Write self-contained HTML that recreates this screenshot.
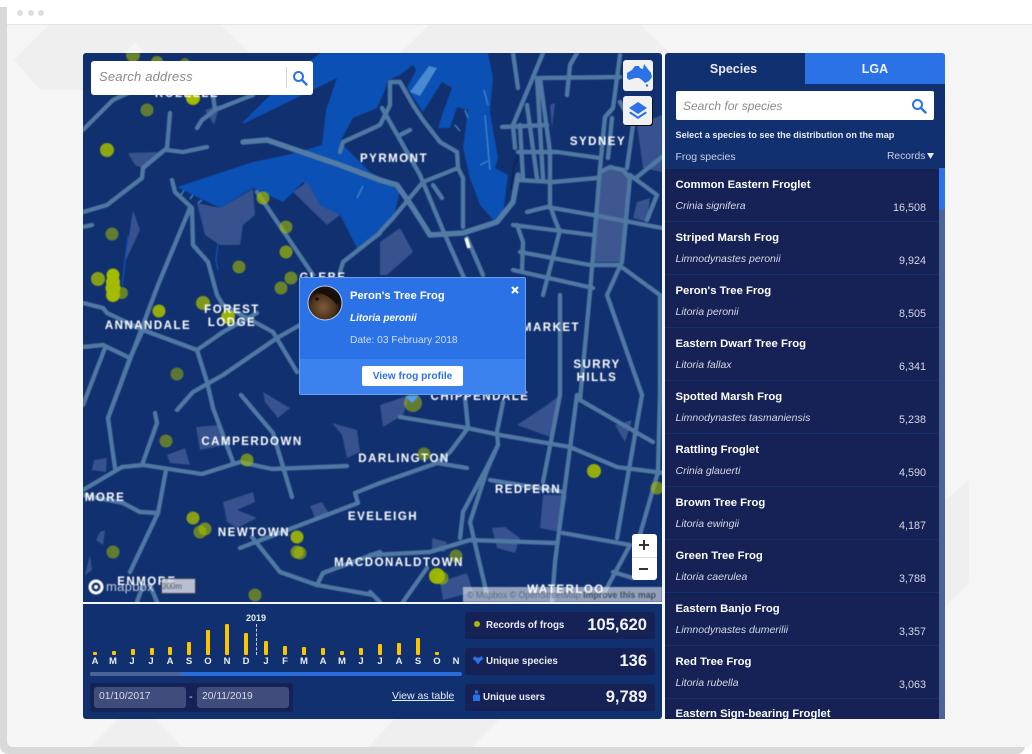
<!DOCTYPE html>
<html><head><meta charset="utf-8"><style>
*{box-sizing:border-box}
html,body{margin:0;padding:0;width:1032px;height:754px;overflow:hidden;background:#fff;font-family:"Liberation Sans",sans-serif}
.abs,.abs *{position:absolute}
.t{white-space:nowrap;line-height:1}
.row{left:665px;width:274px;height:53px;background:#162155;border-bottom:1px solid #12306f}
.row b{left:10.5px;top:9px;font-size:11.3px;color:#fff;white-space:nowrap;line-height:14px}
.row i{left:10.5px;top:31px;font-size:10.5px;color:#d5d9e6;white-space:nowrap;line-height:13px}
.row span{right:13px;top:33px;font-size:10.8px;color:#d5d9e6;line-height:13px}
.m{font-size:9.5px;font-weight:bold;color:#e8ebf3;width:16px;text-align:center;top:656px;line-height:11px}
.bar{background:#fdc500;width:4px;border-radius:1px}
.stat{left:465px;width:190px;height:27px;background:#162155;border-radius:3px}
.stat b{font-size:9.8px;color:#e8ebf3;top:7.500px;line-height:12px;white-space:nowrap}
.stat u{text-decoration:none;right:8px;top:4px;font-size:16.5px;font-weight:bold;color:#f1f3f8;line-height:19px}
</style></head><body>
<div class="abs" style="left:0;top:0;width:1032px;height:754px">
<div style="left:0;top:7px;width:1025px;height:747px;background:#d9d9d9;border-radius:0 0 8px 8px"></div>
<div style="left:7px;top:0;width:1025px;height:747px;background:#f5f5f5;border-radius:6px;overflow:hidden"></div>
<svg width="1032" height="754" style="left:0;top:0"><g fill="#efefef">
<polygon points="50,24 220,24 250,53 145,53 135,43 125,53 83,53 83,90 40,90 14,60"/>
<polygon points="430,24 640,24 670,53 400,53"/>
<polygon points="118,719 155,719 182,747 90,747"/>
<polygon points="395,719 500,719 472,747 368,747"/>
<polygon points="945,500 969,480 969,583 945,607"/>
</g></svg>
<div style="left:7px;top:0;width:1025px;height:25px;background:#fff;border-bottom:1px solid #e3e3e3;border-radius:6px 6px 0 0"></div>
<div style="left:17px;top:10px;width:6px;height:6px;border-radius:50%;background:#dedede"></div>
<div style="left:28px;top:10px;width:6px;height:6px;border-radius:50%;background:#dedede"></div>
<div style="left:38px;top:10px;width:6px;height:6px;border-radius:50%;background:#dedede"></div>

<!-- MAP -->
<div style="left:83px;top:53px;width:579px;height:549px;background:#11306f;border-radius:3px 3px 0 0;overflow:hidden">
<svg width="580" height="550" viewBox="83 53 580 550" style="left:0;top:0;filter:blur(.45px)">
<polygon fill="#0b50b4" points="243,122 280,85 320,53 488,53 493,78 490,112 498,158 495,168 508,175 503,215 494,222 440,300 395,240 357,248 340,215 320,205 303,182 283,202 253,188 220,208 177,187 253,162"/>
<polygon fill="#11306f" points="243,124 337,78 326,110 322,145 287,155 253,162"/>
<polygon fill="#4a8ad2" points="410,92 429,66 437,68 420,96"/>
<polygon fill="#11306f" points="340,142 353,118 377,108 385,90 388,80 400,75 413,65 416,70 407,88 423,112 442,82 452,88 443,112 438,128 450,128 457,107 468,110 463,148 470,178 480,205 495,222 480,280 400,280 392,225 400,190 370,172"/>
<polygon fill="#11306f" points="357,250 395,218 400,280 340,290"/>
<polygon fill="#0b50b4" points="380,205 388,212 380,225 372,228"/>
<g stroke="#3e80cc" stroke-width="1.5" fill="none">
<path d="M184 190l-3 5M193 195l-3 4M202 200l-4 3"/><path d="M363 186l-6 12M465 110l3 8M455 125l5 6M484 90l4 15M485 115l5 55M480 165l8-4"/>
</g>
<path d="M222 210l-6 50 2 10M128 236l-6 50" stroke="#0b50b4" stroke-width="1.5" fill="none"/>
<path d="M518 157l-4 8-3 25" stroke="#0a1f4f" stroke-width="1" fill="none"/>
<g fill="#37528f">
<polygon points="128,153 160,152 143,168 135,165"/>
<polygon points="197,203 220,208 253,189 255,215 243,225 240,245 220,245 205,235"/>
<polygon points="293,192 307,182 320,205 340,215 327,225"/>
<polygon points="263,392 290,408 278,418 265,402"/>
<polygon points="196,427 220,425 225,445 200,450"/>
<polygon points="167,455 185,448 190,465 170,463"/>
<polygon points="332,423 357,430 360,452 347,458 342,435"/>
<polygon points="223,502 253,492 255,502 237,510 257,518 237,528 227,522"/>
<polygon points="543,495 567,495 560,532 540,528"/>
<polygon points="517,425 547,405 560,395 553,438"/>
<polygon points="440,582 467,573 473,592 443,600"/>
<polygon points="380,405 410,395 403,415 383,427"/>
<polygon points="492,528 505,527 520,538 515,553 497,548"/>
<polygon points="432,538 447,542 445,552 432,550"/>
<polygon points="637,125 662,115 662,172 643,168"/>
<polygon points="637,202 650,198 647,222 633,218"/>
<polygon points="380,242 400,228 413,252 387,275 380,275"/>
<polygon points="550,105 555,103 552,128"/>
<polygon points="205,110 220,105 214,125"/>
<polygon points="133,210 140,230 125,262"/>
<polygon points="94,460 107,458 106,472 92,470"/>
<polygon points="310,506 322,502 328,512 315,518"/>
<polygon points="615,425 632,420 625,442"/>
<polygon points="100,532 105,530 103,545 96,540"/>
<polygon points="90,555 92,570 85,575"/>
</g>
<polygon fill="#3f5790" points="600,172 610,167 623,170 630,178 622,262 593,262"/>
<g fill="none" stroke="#4f78a3" stroke-width="4.400" stroke-linecap="round" stroke-linejoin="round">
<path d="M83 130L113 100 128 93"/>
<path d="M197 128L202 120 215 110 240 100 253 95M213 95L215 110"/>
<path d="M170 113L167 148 143 168 142 178 107 205 83 212"/>
<path d="M167 150L183 152 207 147"/>
<path d="M83 227L92 225"/>
<path d="M172 180L175 192 192 208 193 245 208 262 217 295 223 305 273 332 297 372"/>
<path d="M190 208L158 285 108 418 115 468"/>
<path d="M257 192L313 275"/>
<path d="M340 272L343 262 380 233"/>
<path d="M340 152L343 142 380 125 390 105 390 82 400 82 413 105 423 120 440 142 457 152 458 168 463 178 463 227"/>
<path d="M382 108L420 175 445 235 465 280"/>
<path d="M458 168L423 182 393 218 380 232"/>
<path d="M400 135L410 130M433 185L442 198"/>
<path d="M513 53L518 88M543 53L513 125 515 148"/>
<path d="M540 78L550 152 550 205M527 105L537 178M537 78L543 178M520 125L523 178"/>
<path d="M502 127L547 125M518 152L557 152 600 158M518 180L553 182 597 178"/>
<path d="M542 78L620 77M567 95L570 65 577 53"/>
<path d="M620 55L613 108 605 117 600 168 590 292"/>
<path d="M612 118L608 158"/>
<path d="M600 172L610 167 623 170 630 178 622 262 607 295"/>
<path d="M620 102L633 125 627 168"/>
<path d="M527 212L547 207 593 215 662 228"/>
<path d="M513 225L593 235"/>
<path d="M630 175L657 195 647 220M637 177L662 157"/>
<path d="M560 230L543 295M520 252L590 265 620 265"/>
<path d="M517 225L523 242 522 272M513 270L593 288M623 268L660 295"/>
<path d="M550 205L555 220 560 232M467 238L483 275"/>
<path d="M83 303L103 308 107 313 143 330 197 350 223 332 257 313"/>
<path d="M197 350L207 382 213 408 233 462"/>
<path d="M177 410L193 392 223 375 277 338 300 325"/>
<path d="M83 347L103 345 130 358M105 348L83 405M143 330L130 358 108 418"/>
<path d="M155 413L157 423 142 465"/>
<path d="M83 490L122 467 143 465 202 474 240 462 272 469 347 466"/>
<path d="M241 395L273 433 292 497"/>
<path d="M166 470L158 513 130 572"/>
<path d="M83 495L123 503 140 512 158 513"/>
<path d="M240 548L358 503 355 493 380 483 437 463 467 468"/>
<path d="M252 537L280 572 317 585 373 595"/>
<path d="M317 585L323 573 380 552"/>
<path d="M137 602L143 585M150 585L157 602"/>
<path d="M400 417L467 428 500 435 570 447 617 467 663 473"/>
<path d="M465 398L468 427M503 402L497 432 498 445 487 467 463 512 460 538"/>
<path d="M498 445L487 470 470 522 487 595"/>
<path d="M370 555L430 552 470 540 555 543"/>
<path d="M560 395L543 482M577 395L555 562 552 602"/>
<path d="M580 400L653 442M642 395L617 538M660 395L658 472 637 545"/>
<path d="M563 533L630 545 603 595M490 480L563 492"/>
<path d="M468 428L450 452 437 463"/>
<path d="M403 602L427 568M370 592L380 602M613 572L633 578"/>
<path d="M560 295L560 395M590 292L580 400M607 295L642 395M660 295L660 395"/>
</g>
<g fill="none" stroke="#527ba5" stroke-width="5.500" stroke-linecap="round" stroke-linejoin="round">
<path d="M243 142L267 140 340 165 380 180 397 185 413 208 430 235 463 233 497 222 513 202 518 175"/>
</g>
<path d="M466 238l3 10" stroke="#fff" stroke-width="3.500"/>
<g fill="#a4bb00">
<circle cx="133" cy="55" r="7" opacity=".6"/><circle cx="157" cy="62" r="6" opacity=".6"/><circle cx="185" cy="63" r="5" opacity=".5"/>
<circle cx="193" cy="98" r="7"/><circle cx="147" cy="110" r="6.500" opacity=".55"/><circle cx="107" cy="150" r="7" opacity=".85"/>
<circle cx="112" cy="234" r="6.500" opacity=".55"/><circle cx="98" cy="279" r="7" opacity=".8"/><circle cx="113" cy="275" r="6.500"/>
<circle cx="113" cy="282" r="7"/><circle cx="113" cy="288" r="7.500"/><circle cx="113" cy="295" r="7"/><circle cx="122" cy="293" r="6" opacity=".6"/>
<circle cx="263" cy="198" r="6.500" opacity=".7"/><circle cx="286" cy="227" r="6.500" opacity=".6"/><circle cx="286" cy="252" r="6.500" opacity=".7"/>
<circle cx="239" cy="267" r="6.500" opacity=".6"/><circle cx="291" cy="278" r="6.500" opacity=".6"/><circle cx="281" cy="288" r="6.500" opacity=".6"/>
<circle cx="159" cy="311" r="6.500" opacity=".9"/><circle cx="203" cy="303" r="7" opacity=".75"/><circle cx="228" cy="317" r="7" opacity=".95"/>
<circle cx="177" cy="374" r="6.500" opacity=".5"/><circle cx="166" cy="441" r="6.500" opacity=".55"/><circle cx="247" cy="460" r="6.500" opacity=".65"/>
<circle cx="193" cy="518" r="6.500" opacity=".8"/><circle cx="205" cy="529" r="6.500" opacity=".65"/><circle cx="200" cy="532" r="6.500" opacity=".6"/>
<circle cx="113" cy="552" r="6.500" opacity=".55"/><circle cx="297" cy="537" r="6.500" opacity=".9"/><circle cx="297" cy="552" r="6.500" opacity=".65"/><circle cx="300" cy="553" r="6.500" opacity=".6"/>
<circle cx="255" cy="595" r="6.500" opacity=".55"/><circle cx="413" cy="403" r="9" opacity=".55"/><circle cx="424" cy="454" r="6.500" opacity=".55"/>
<circle cx="594" cy="471" r="7" opacity=".9"/><circle cx="657" cy="488" r="6.500" opacity=".6"/><circle cx="456" cy="556" r="6.500" opacity=".55"/>
<circle cx="442" cy="578" r="6.500" opacity=".6"/><circle cx="437" cy="576" r="8" opacity=".95"/>
</g>
<polygon fill="#4aa0ff" points="405,396 419,396 412,403"/>
<g fill="#fff" font-family="'Liberation Sans',sans-serif" font-weight="bold" font-size="11.500" text-anchor="middle" letter-spacing="1.500">
<text x="187" y="97">ROZELLE</text><text x="394" y="162">PYRMONT</text><text x="598" y="145">SYDNEY</text><text x="323" y="281">GLEBE</text>
<text x="232" y="313">FOREST</text><text x="232" y="326">LODGE</text><text x="148" y="329">ANNANDALE</text><text x="252" y="445">CAMPERDOWN</text>
<text x="404" y="462">DARLINGTON</text><text x="383" y="520">EVELEIGH</text><text x="254" y="536">NEWTOWN</text><text x="105" y="501">MORE</text>
<text x="147" y="585">ENMORE</text><text x="399" y="566">MACDONALDTOWN</text><text x="528" y="493">REDFERN</text><text x="566" y="593">WATERLOO</text>
<text x="597" y="368">SURRY</text><text x="597" y="381">HILLS</text><text x="551" y="331">MARKET</text><text x="480" y="400">CHIPPENDALE</text>
</g>
<rect x="463" y="587" width="199" height="15" fill="#fff" opacity=".55"/>
<text x="467" y="598" font-family="'Liberation Sans',sans-serif" font-size="8.800" fill="#5c6a80">© Mapbox © OpenStreetMap <tspan font-weight="bold" fill="#444d5c">Improve this map</tspan></text>
<circle cx="96" cy="587" r="6" fill="none" stroke="#fff" stroke-width="3"/><circle cx="96" cy="587" r="2" fill="#fff"/>
<text x="106" y="591" font-family="'Liberation Sans',sans-serif" font-size="13" fill="#fff" opacity=".75" letter-spacing=".3">mapbox</text>
<rect x="161.500" y="578.500" width="34" height="15" fill="#d5d9e6" opacity=".85" stroke="#444" stroke-width="1"/>
<text x="162" y="589" font-family="'Liberation Sans',sans-serif" font-size="8" fill="#555">300m</text>
</svg>
</div>

<!-- search address -->
<div style="left:91px;top:61px;width:222px;height:34px;background:#fff;border-radius:3px"></div>
<div class="t" style="left:99px;top:70px;font-size:13px;font-style:italic;color:#8a8a8a;letter-spacing:.2px">Search address</div>
<div style="left:286px;top:67px;width:1px;height:21px;background:#d4d4d4"></div>
<svg width="16" height="16" viewBox="0 0 16 16" style="left:292px;top:70px"><circle cx="6.500" cy="6.500" r="4.500" fill="none" stroke="#2b72e6" stroke-width="2"/><path d="M10 10l4.500 4.500" stroke="#2b72e6" stroke-width="2.400" stroke-linecap="round"/></svg>
<!-- Aus button -->
<div style="left:623px;top:60px;width:30px;height:31px;background:#f1f1f1;border-radius:3px"></div>
<svg width="30" height="31" viewBox="0 0 30 31" style="left:623px;top:60px"><path d="M4 13L9 10 12 6 16 6 17 8 20 9 21 4 24 8 28 13 29 17 26 21 22 23 19 20 16 18 12 18 6 20 4 18Z" fill="#2b72e6"/><circle cx="24" cy="25.500" r="1.200" fill="#2b72e6"/></svg>
<!-- layers -->
<div style="left:623px;top:96px;width:29px;height:29px;background:#f1f1f1;border-radius:3px;box-shadow:1px 1px 0 #111"></div>
<svg width="22" height="22" viewBox="0 0 22 22" style="left:627px;top:100px"><path d="M11 2L20 8 11 14 2 8Z" fill="#2b72e6"/><path d="M3.500 11.500L11 16.500 18.500 11.500 20 13 11 19 2 13Z" fill="#2b72e6"/></svg>
<!-- zoom -->
<div style="left:632px;top:534px;width:25px;height:46px;background:#fff;border-radius:3px"></div>
<div style="left:632px;top:557px;width:25px;height:1px;background:#ddd"></div>
<div style="left:639px;top:544px;width:10px;height:2px;background:#333"></div><div style="left:643px;top:540px;width:2px;height:10px;background:#333"></div>
<div style="left:639px;top:568px;width:9px;height:2px;background:#333"></div>

<!-- popup -->
<div style="left:299px;top:277px;width:227px;height:118px;background:#2b72e6;border:1px solid #6d9fea;border-radius:2px;overflow:hidden"></div>
<div style="left:300px;top:359px;width:225px;height:35px;background:#3b82ee"></div>
<svg width="36" height="36" viewBox="0 0 36 36" style="left:307px;top:285px"><defs><radialGradient id="fg" cx=".45" cy=".62" r=".5"><stop offset="0" stop-color="#7e5c3a"/><stop offset=".7" stop-color="#4c331c"/><stop offset="1" stop-color="#1c120a"/></radialGradient></defs><circle cx="18" cy="18" r="17" fill="url(#fg)" stroke="#b8cdf0" stroke-width="1"/><path d="M12 3 Q26 4 34 14 L30 20 Q20 8 10 8Z" fill="#17100a"/><ellipse cx="10" cy="14" rx="2" ry="1.500" fill="#1a0f08"/></svg>
<div class="t" style="left:350px;top:291px;font-size:11.200px;font-weight:bold;color:#fff">Peron's Tree Frog</div>
<div class="t" style="left:350px;top:314px;font-size:10px;font-weight:bold;font-style:italic;color:#fff">Litoria peronii</div>
<div class="t" style="left:350px;top:336px;font-size:10.200px;color:#cfdef8">Date: 03 February 2018</div>
<svg width="10" height="10" viewBox="0 0 10 10" style="left:510px;top:285px"><path d="M2 2l6 6M8 2l-6 6" stroke="#fff" stroke-width="2"/></svg>
<div style="left:362px;top:366px;width:101px;height:20px;background:#fff;border-radius:2px"></div>
<div class="t" style="left:362px;top:372px;width:101px;text-align:center;font-size:10.200px;font-weight:bold;color:#2b72e6">View frog profile</div>

<!-- right panel -->
<div style="left:665px;top:53px;width:280px;height:116px;background:#11306f;border-radius:3px 3px 0 0"></div>
<div style="left:805px;top:53px;width:140px;height:31px;background:#2b72e6;border-radius:0 3px 0 0"></div>
<div class="t" style="left:665px;top:63px;width:137px;text-align:center;font-size:12.500px;font-weight:bold;color:#e6ebf5">Species</div>
<div class="t" style="left:805px;top:63px;width:140px;text-align:center;font-size:12.500px;font-weight:bold;color:#f2f6fd">LGA</div>
<div style="left:676px;top:91px;width:258px;height:29px;background:#fff;border-radius:2px"></div>
<div class="t" style="left:683px;top:100px;font-size:12px;font-style:italic;color:#8a8a8a">Search for species</div>
<svg width="16" height="16" viewBox="0 0 16 16" style="left:911px;top:98px"><circle cx="6.500" cy="6.500" r="4.500" fill="none" stroke="#2b72e6" stroke-width="2"/><path d="M10 10l4.500 4.500" stroke="#2b72e6" stroke-width="2.400" stroke-linecap="round"/></svg>
<div class="t" style="left:675.500px;top:131px;font-size:9.100px;font-weight:bold;color:#e8ebf3">Select a species to see the distribution on the map</div>
<div class="t" style="left:675.500px;top:151.500px;font-size:10.500px;color:#c9d0e2">Frog species</div>
<div class="t" style="left:887px;top:151.500px;font-size:10.300px;color:#c9d0e2">Records</div>
<svg width="8" height="7" style="left:927px;top:153px"><polygon points="0,0 7,0 3.500,6" fill="#e6ebf5"/></svg>

<div style="left:665px;top:169px;width:280px;height:550px;overflow:hidden;background:#162155"></div>
<div class="row" style="top:169px"><b>Common Eastern Froglet</b><i>Crinia signifera</i><span>16,508</span></div>
<div class="row" style="top:222px"><b>Striped Marsh Frog</b><i>Limnodynastes peronii</i><span>9,924</span></div>
<div class="row" style="top:275px"><b>Peron's Tree Frog</b><i>Litoria peronii</i><span>8,505</span></div>
<div class="row" style="top:328px"><b>Eastern Dwarf Tree Frog</b><i>Litoria fallax</i><span>6,341</span></div>
<div class="row" style="top:381px"><b>Spotted Marsh Frog</b><i>Limnodynastes tasmaniensis</i><span>5,238</span></div>
<div class="row" style="top:434px"><b>Rattling Froglet</b><i>Crinia glauerti</i><span>4,590</span></div>
<div class="row" style="top:487px"><b>Brown Tree Frog</b><i>Litoria ewingii</i><span>4,187</span></div>
<div class="row" style="top:540px"><b>Green Tree Frog</b><i>Litoria caerulea</i><span>3,788</span></div>
<div class="row" style="top:593px"><b>Eastern Banjo Frog</b><i>Limnodynastes dumerilii</i><span>3,357</span></div>
<div class="row" style="top:646px"><b>Red Tree Frog</b><i>Litoria rubella</i><span>3,063</span></div>
<div style="left:665px;top:699px;width:274px;height:20px;overflow:hidden"><div class="t" style="left:10.500px;top:10px;font-size:11.300px;font-weight:bold;color:#fff">Eastern Sign-bearing Froglet</div></div>
<div style="left:939px;top:168px;width:6px;height:551px;background:#4c6396"></div>
<div style="left:939px;top:168px;width:6px;height:42px;background:#2b72e6;border-radius:2px"></div>

<!-- bottom panel -->
<div style="left:83px;top:604px;width:579px;height:115px;background:#11306f;border-radius:0 0 3px 3px"></div>
<div class="t" style="left:236px;top:614px;width:40px;text-align:center;font-size:9px;font-weight:bold;color:#e8ebf3">2019</div>
<div style="left:256px;top:624px;height:31px;border-left:1px dashed #c9d0e2"></div>
<div class="bar" style="left:93px;top:652px;height:3px"></div>
<div class="bar" style="left:112px;top:651px;height:4px"></div>
<div class="bar" style="left:131px;top:649px;height:6px"></div>
<div class="bar" style="left:150px;top:648px;height:7px"></div>
<div class="bar" style="left:168px;top:647px;height:8px"></div>
<div class="bar" style="left:187px;top:642px;height:13px"></div>
<div class="bar" style="left:206px;top:630px;height:25px"></div>
<div class="bar" style="left:225px;top:624px;height:31px"></div>
<div class="bar" style="left:244px;top:633px;height:22px"></div>
<div class="bar" style="left:264px;top:641px;height:14px"></div>
<div class="bar" style="left:283px;top:646px;height:9px"></div>
<div class="bar" style="left:302px;top:647px;height:8px"></div>
<div class="bar" style="left:321px;top:648px;height:7px"></div>
<div class="bar" style="left:340px;top:651px;height:4px"></div>
<div class="bar" style="left:359px;top:648px;height:7px"></div>
<div class="bar" style="left:378px;top:644px;height:11px"></div>
<div class="bar" style="left:397px;top:643px;height:12px"></div>
<div class="bar" style="left:416px;top:638px;height:17px"></div>
<div class="bar" style="left:435px;top:652px;height:3px"></div>
<div class="m" style="left:87px">A</div><div class="m" style="left:105px">M</div><div class="m" style="left:124px">J</div><div class="m" style="left:143px">J</div><div class="m" style="left:162px">A</div><div class="m" style="left:181px">S</div><div class="m" style="left:200px">O</div><div class="m" style="left:219px">N</div><div class="m" style="left:238px">D</div><div class="m" style="left:258px">J</div><div class="m" style="left:277px">F</div><div class="m" style="left:296px">M</div><div class="m" style="left:315px">A</div><div class="m" style="left:334px">M</div><div class="m" style="left:353px">J</div><div class="m" style="left:372px">J</div><div class="m" style="left:391px">A</div><div class="m" style="left:410px">S</div><div class="m" style="left:429px">O</div><div class="m" style="left:448px">N</div>
<div style="left:90px;top:672px;width:372px;height:4px;background:#2a6cdb;border-radius:2px"></div>
<div style="left:90px;top:672px;width:91px;height:4px;background:#4c6396;border-radius:2px 0 0 2px"></div>
<div style="left:90px;top:683px;width:203px;height:29px;background:#162155;border-radius:3px"></div>
<div style="left:94px;top:687px;width:92px;height:21px;background:#3f4c7c;border-radius:3px"></div>
<div style="left:197px;top:687px;width:92px;height:21px;background:#3f4c7c;border-radius:3px"></div>
<div class="t" style="left:99px;top:692px;font-size:10.300px;color:#d8dbe8">01/10/2017</div>
<div class="t" style="left:202px;top:692px;font-size:10.300px;color:#d8dbe8">20/11/2019</div>
<div class="t" style="left:189px;top:692px;font-size:11px;color:#d8dbe8">-</div>
<div class="t" style="left:392px;top:691px;font-size:10.500px;color:#e6ebf5;text-decoration:underline">View as table</div>

<div class="stat" style="top:612px"><b style="left:21px">Records of frogs</b><u>105,620</u></div>
<div style="left:474px;top:620.500px;width:6px;height:6px;border-radius:50%;background:#a4bb00"></div>
<div class="stat" style="top:648px"><b style="left:21px">Unique species</b><u>136</u></div>
<svg width="10" height="9" viewBox="0 0 10 9" style="left:473px;top:656px"><path d="M1 0L3.500 1.500H6.500L9 0 10 3.500 8 4.500 5 8.500 2 4.500 0 3.500Z" fill="#2b72e6"/></svg>
<div class="stat" style="top:684px"><b style="left:18px">Unique users</b><u>9,789</u></div>
<svg width="7" height="11" viewBox="0 0 7 11" style="left:472.500px;top:690px"><circle cx="3.500" cy="2" r="1.800" fill="#2b72e6"/><path d="M1 4.500h5l1 1v5.500H0V5.500Z" fill="#2b72e6"/></svg>
</div>
</body></html>
